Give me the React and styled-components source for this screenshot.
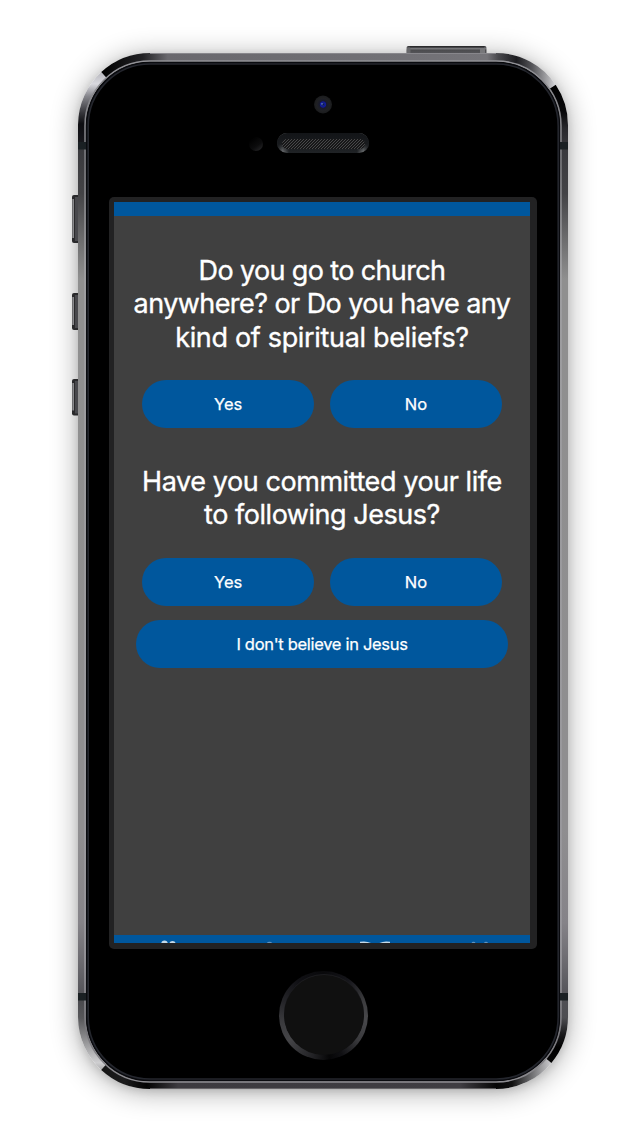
import React from "react";
import styled, { createGlobalStyle } from "styled-components";

const BLUE = "#00579d";

const GlobalStyle = createGlobalStyle`
  body {
    margin: 0;
    background: #fff;
  }
  * {
    box-sizing: border-box;
  }
`;

const Stage = styled.main`
  display: flex;
  justify-content: center;
  width: 640px;
  height: 1136px;
  padding: 53px 0 0 6px;
  overflow: hidden;
  font-family: Inter, "Liberation Sans", sans-serif;
`;

const Phone = styled.div`
  position: relative;
  width: 490px;
  height: 1036px;
  border-radius: 72px;
  box-shadow: 0 3px 28px rgba(0, 0, 0, 0.33), 0 2px 8px rgba(0, 0, 0, 0.12);
`;

const Hardware = styled.svg`
  position: absolute;
  left: -78px;
  top: -53px;
  pointer-events: none;
`;

const Front = styled.div`
  position: relative;
  display: flex;
  flex-direction: column;
  align-items: center;
  padding: 143.5px 1px 0 0;
`;

const Bezel = styled.section`
  width: 428px;
  height: 752px;
  padding: 5.5px 6px 6px 5px;
  border-radius: 5px;
  background: #222223;
`;

const Screen = styled.div`
  display: flex;
  flex-direction: column;
  width: 416px;
  height: 741px;
  overflow: hidden;
  background: #404040;
`;

const StatusBar = styled.div`
  flex: none;
  height: 13.5px;
  background: ${BLUE};
`;

const Survey = styled.div`
  flex: 1;
  display: flex;
  flex-direction: column;
  align-items: center;
  gap: 36.4px;
  padding: 38px 0 0 1px;
`;

const Question = styled.section`
  display: flex;
  flex-direction: column;
  align-items: center;
`;

const Title = styled.h2`
  margin: 0 0 26.3px;
  font-size: 27px;
  font-weight: 400;
  line-height: 33.5px;
  text-align: center;
  color: #fff;
  -webkit-text-stroke: 0.35px #fff;
`;

const Line = styled.span`
  display: block;
  white-space: nowrap;
  letter-spacing: ${(p) => p.$track}px;
`;

const Answers = styled.div`
  display: flex;
  gap: 15.2px;
`;

const Answer = styled.button`
  width: ${(p) => (p.$wide ? 371.3 : 172.6)}px;
  height: 48px;
  margin-top: ${(p) => (p.$wide ? 14.2 : 0)}px;
  padding: 0;
  border: 0;
  border-radius: 24px;
  background: ${BLUE};
  color: #fff;
  font: 400 16.5px/48px Inter, "Liberation Sans", sans-serif;
  letter-spacing: ${(p) => (p.$wide ? -0.31 : 0)}px;
  -webkit-text-stroke: 0.25px #fff;
`;

const TabBar = styled.nav`
  flex: none;
  height: 7.7px;
  background: ${BLUE};
`;

const TabIcons = styled.svg`
  display: block;
`;

const Home = styled.button`
  width: 89px;
  height: 89px;
  margin: 22px 0 0 2px;
  padding: 4.5px;
  border: 0;
  border-radius: 50%;
  background: conic-gradient(
    #09090b 0deg, #15151a 35deg, #3c3c3e 70deg, #48484b 95deg, #3a3a3d 125deg,
    #101013 155deg, #060607 172deg, #222225 195deg, #454548 235deg,
    #3a3a3d 262deg, #242428 290deg, #101014 325deg, #09090b 360deg
  );
`;

const HomeFace = styled.span`
  display: block;
  width: 80px;
  height: 80px;
  border-radius: 50%;
  background: #101010;
  box-shadow: 0 -1px 0 #1d1d20;
`;

function Gradient({ id, from, to, stops }) {
  return (
    <linearGradient id={id} gradientUnits="userSpaceOnUse" x1={from[0]} y1={from[1]} x2={to[0]} y2={to[1]}>
      {stops.map(([at, color]) => (
        <stop key={at} offset={at} stopColor={color} />
      ))}
    </linearGradient>
  );
}

function SideButton({ y, height }) {
  return (
    <g>
      <rect x="72" y={y} width="10" height={height} rx="2" fill="#29292b" />
      <rect x="72.3" y={y + 4} width="1.7" height={height - 9} fill="#8a8a8d" />
      <rect x="75" y={y + 2} width="3" height={height - 4} fill="#48484c" />
    </g>
  );
}

function DeviceShell() {
  return (
    <Hardware width="640" height="1136" viewBox="0 0 640 1136" aria-hidden="true">
      <defs>
        <Gradient id="side" from={[0, 142]} to={[0, 1000]} stops={[
          [0, "#38383c"], [0.06, "#434346"], [0.12, "#717172"], [0.16, "#8f8f8f"],
          [0.8, "#8f8e90"], [0.91, "#858388"], [0.96, "#69686d"], [1, "#505055"],
        ]} />
        <Gradient id="topEdge" from={[102, 0]} to={[555, 0]} stops={[
          [0, "#000"], [0.09, "#222225"], [0.145, "#69686d"], [0.85, "#757479"],
          [0.875, "#48484c"], [0.915, "#1b1b1f"], [0.95, "#56565a"], [0.985, "#aaaaad"], [1, "#d3d3d7"],
        ]} />
        <Gradient id="bottomEdge" from={[102, 0]} to={[550, 0]} stops={[
          [0, "#151515"], [0.05, "#1c1c1d"], [0.1, "#020202"], [0.17, "#3c3a3f"],
          [0.8, "#3f3d42"], [0.88, "#050505"], [0.915, "#101010"], [0.95, "#5b5b5d"], [1, "#c6c6c9"],
        ]} />
        <Gradient id="leftTop" from={[0, 72]} to={[0, 146]} stops={[
          [0, "#b6b6bc"], [0.16, "#d9d9df"], [0.33, "#85858b"], [0.55, "#36363b"], [0.7, "#0d0d11"], [1, "#19191e"],
        ]} />
        <Gradient id="rightTop" from={[0, 84]} to={[0, 146]} stops={[
          [0, "#000"], [0.45, "#08080a"], [0.72, "#28282c"], [1, "#36363a"],
        ]} />
        <Gradient id="leftBottom" from={[0, 998]} to={[0, 1070]} stops={[
          [0, "#48484c"], [0.28, "#57575a"], [0.6, "#939395"], [0.9, "#cfcfd1"], [1, "#a9a9ab"],
        ]} />
        <Gradient id="rightBottom" from={[0, 998]} to={[0, 1064]} stops={[
          [0, "#505055"], [0.3, "#4d4d51"], [0.55, "#1a1a1c"], [0.75, "#000"], [1, "#050505"],
        ]} />
        <Gradient id="rim" from={[0, 60]} to={[0, 1084]} stops={[
          [0, "#929297"], [0.1, "#77777b"], [0.2, "#a0a0a3"], [0.88, "#99989d"], [0.95, "#77767b"], [1, "#8d8c91"],
        ]} />
        <Gradient id="power" from={[0, 46]} to={[0, 54]} stops={[
          [0, "#252528"], [0.3, "#77777a"], [0.55, "#4c4c4f"], [1, "#56565a"],
        ]} />
        <Gradient id="earRing" from={[277, 0]} to={[369, 0]} stops={[
          [0, "#202225"], [0.06, "#777a7c"], [0.13, "#202326"], [0.87, "#202326"], [0.94, "#777a7c"], [1, "#202225"],
        ]} />
        <linearGradient id="earFade" gradientUnits="userSpaceOnUse" x1="0" y1="133" x2="0" y2="153">
          <stop offset="0" stopColor="#131518" />
          <stop offset="0.55" stopColor="#181a1d" />
          <stop offset="1" stopColor="#181a1d" stopOpacity="0" />
        </linearGradient>
        <radialGradient id="lens">
          <stop offset="0" stopColor="#070920" />
          <stop offset="0.12" stopColor="#142476" />
          <stop offset="0.3" stopColor="#11189a" />
          <stop offset="0.4" stopColor="#181a2c" />
          <stop offset="0.7" stopColor="#202123" />
          <stop offset="1" stopColor="#1a1b1d" />
        </radialGradient>
        <Gradient id="sensor" from={[251, 139]} to={[260, 151]} stops={[[0, "#000"], [0.6, "#0c0c0d"], [1, "#242426"]]} />
        <pattern id="mesh" width="3" height="3" patternUnits="userSpaceOnUse">
          <rect width="3" height="3" fill="#171718" />
          <path d="M0 1H1M1 0H2M2 2H3" transform="translate(0 .5)" stroke="#48484a" strokeWidth="1" />
        </pattern>
      </defs>

      <rect x="406.5" y="46" width="80" height="9" rx="2" fill="url(#power)" />
      <rect x="410" y="46" width="74" height="1.4" fill="#2b2b2d" />
      <rect x="407" y="48" width="3.5" height="5" fill="#68686b" />
      <rect x="480" y="48" width="5" height="5" fill="#77777a" />
      <SideButton y={195} height={48} />
      <SideButton y={293} height={37} />
      <SideButton y={379} height={36.5} />

      <rect x="82" y="57" width="482" height="1028" rx="68" fill="#000" />
      <g fill="none" strokeWidth="8">
        <path d="M82 142V1000M564 142V1000" stroke="url(#side)" />
        <path d="M82 146V125A68 68 0 0 1 104.5 74.55" stroke="url(#leftTop)" />
        <path d="M104 75A68 68 0 0 1 150 57H496A68 68 0 0 1 552.6 87.3" stroke="url(#topEdge)" />
        <path d="M552.4 87A68 68 0 0 1 564 125V146" stroke="url(#rightTop)" />
        <path d="M82 998V1017A68 68 0 0 0 104.4 1067.4" stroke="url(#leftBottom)" />
        <path d="M103.9 1067A68 68 0 0 0 150 1085H496A68 68 0 0 0 548.6 1060.1" stroke="url(#bottomEdge)" />
        <path d="M548.3 1060.4A68 68 0 0 0 564 1017V998" stroke="url(#rightBottom)" />
      </g>
      <rect x="85" y="61" width="476" height="1021" rx="65" fill="none" stroke="url(#rim)" strokeWidth="1.6" />
      <rect x="86" y="62" width="474" height="1019" rx="64" fill="#0a0b0f" />
      <rect x="88.2" y="64" width="470" height="1015" rx="62" fill="#000" stroke="#24262d" strokeWidth="1.6" />
      <path d="M150 53.5H496" stroke="#88878c" strokeWidth="1" />
      <path d="M150 1088.6H496" stroke="#77767a" strokeWidth="0.8" />
      <path d="M78 145.7H86M560 145.7H568M78 996.7H86M560 996.7H568" stroke="#1a2023" strokeWidth="7.6" />

      <circle cx="323" cy="104.5" r="9" fill="url(#lens)" />
      <circle cx="322" cy="103.8" r="0.9" fill="#5c78b8" />
      <circle cx="256" cy="144" r="7" fill="url(#sensor)" />
      <rect x="277" y="133" width="92" height="20" rx="10" fill="url(#earRing)" />
      <rect x="277" y="133" width="92" height="20" rx="10" fill="url(#earFade)" />
      <rect x="282" y="139" width="83" height="10" rx="5" fill="url(#mesh)" />
    </Hardware>
  );
}

const questions = [
  {
    lines: [
      ["Do you go to church", -0.63],
      ["anywhere? or Do you have any", -0.57],
      ["kind of spiritual beliefs?", -0.33],
    ],
  },
  {
    lines: [
      ["Have you committed your life", -0.43],
      ["to following Jesus?", -0.47],
    ],
    other: "I don't believe in Jesus",
  },
];

export default function App() {
  return (
    <>
      <GlobalStyle />
      <Stage>
        <Phone>
          <DeviceShell />
          <Front>
            <Bezel>
              <Screen>
                <StatusBar />
                <Survey>
                  {questions.map(({ lines, other }) => (
                    <Question key={lines[0][0]}>
                      <Title>
                        {lines.map(([text, track]) => (
                          <Line key={text} $track={track}>{text}</Line>
                        ))}
                      </Title>
                      <Answers>
                        <Answer>Yes</Answer>
                        <Answer>No</Answer>
                      </Answers>
                      {other && <Answer $wide>{other}</Answer>}
                    </Question>
                  ))}
                </Survey>
                <TabBar>
                  <TabIcons width="416" height="8" viewBox="0 0 416 8" aria-hidden="true">
                    <g fill="#c5d9e8">
                      <circle cx="50.5" cy="8.6" r="3.2" />
                      <circle cx="58.5" cy="9.2" r="3.2" />
                      <path d="M246 8V6.8Q252 5.6 257 8ZM265.5 8Q270 5.6 276 6.8V8Z" />
                    </g>
                    <g fill="#5f93bf">
                      <circle cx="155.5" cy="9.7" r="3" />
                      <circle cx="359.5" cy="8.7" r="2" />
                      <circle cx="372" cy="8.7" r="2" />
                    </g>
                  </TabIcons>
                </TabBar>
              </Screen>
            </Bezel>
            <Home aria-label="Home">
              <HomeFace />
            </Home>
          </Front>
        </Phone>
      </Stage>
    </>
  );
}
